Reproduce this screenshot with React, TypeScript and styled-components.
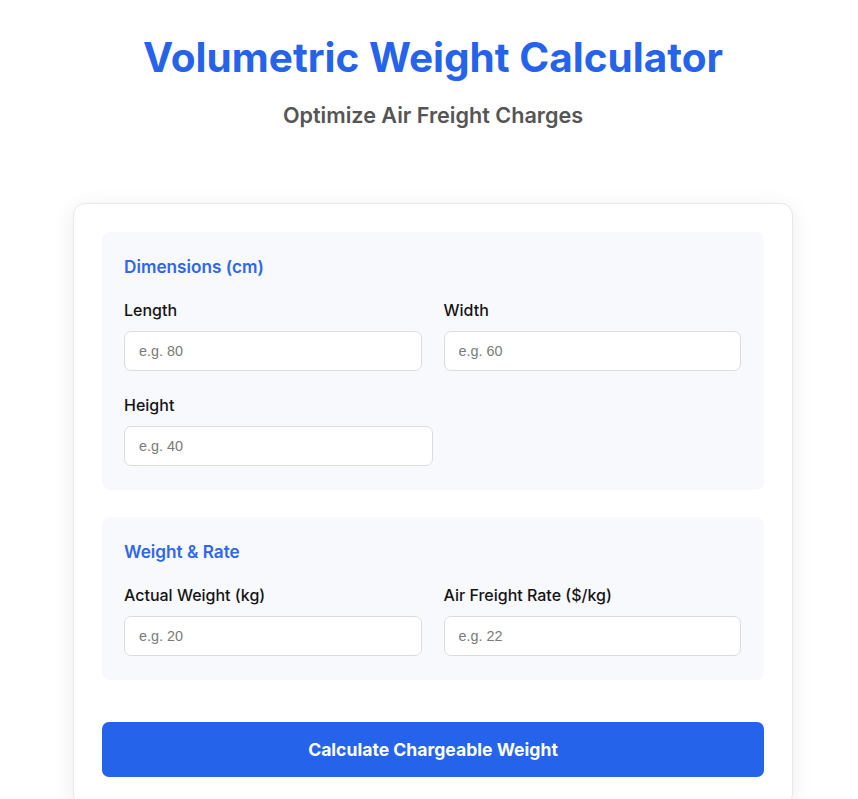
import React from "react";
import styled, { createGlobalStyle } from "styled-components";

const GlobalStyle = createGlobalStyle`
  html, body {
    margin: 0;
    padding: 0;
    background: #ffffff;
  }
  body {
    font-family: Inter, "Noto Sans", sans-serif;
    color: #1f1f1f;
  }
  * { box-sizing: border-box; }
`;

const Page = styled.div`
  padding: 34px 0 40px 8px;
  display: flex;
  flex-direction: column;
  align-items: center;
`;

const Header = styled.header`
  text-align: center;
  margin-bottom: 75px;
`;

const Title = styled.h1`
  margin: 0;
  font-size: 40.5px;
  line-height: 48px;
  font-weight: 700;
  color: #2563eb;
`;

const Subtitle = styled.p`
  margin: 21px 0 0;
  font-size: 21.6px;
  line-height: 25px;
  font-weight: 600;
  color: #555555;
`;

const Card = styled.main`
  width: 720px;
  background: #ffffff;
  border: 1px solid #e6e8ec;
  border-radius: 12px;
  box-shadow: 0 4px 22px rgba(0, 0, 0, 0.08);
  padding: 28px;
  display: flex;
  flex-direction: column;
`;

const Section = styled.section`
  background: #f8f9fd;
  border-radius: 8px;
  padding: 24px 23px 24px 22px;
  margin-bottom: 27px;
  &:last-of-type {
    margin-bottom: 42px;
  }
`;

const SectionTitle = styled.h2`
  margin: 0 0 24px;
  font-size: 17.2px;
  line-height: 21px;
  font-weight: 600;
  color: #2f66ec;
`;

const Grid = styled.div`
  display: grid;
  grid-template-columns: 1fr 1fr;
  column-gap: 22px;
  row-gap: 25px;
`;

const Field = styled.div<{ $half?: boolean }>`
  display: flex;
  flex-direction: column;
  ${(p) => (p.$half ? "grid-column: 1 / -1; width: 50%;" : "")}
`;

const Label = styled.label`
  font-size: 16px;
  line-height: 19px;
  font-weight: 450;
  color: #141414;
  margin-bottom: 11px;
`;

const Input = styled.input`
  height: 40px;
  width: 100%;
  padding: 0 14px;
  border: 1px solid #dcdcdc;
  border-radius: 7px;
  background: #ffffff;
  font-family: "Liberation Sans", Arial, sans-serif;
  font-size: 14.4px;
  color: #222;
  outline: none;
  &::placeholder {
    color: #7a7a7a;
  }
`;

const Button = styled.button`
  height: 55px;
  width: 100%;
  border: none;
  border-radius: 7px;
  background: #2563eb;
  color: #ffffff;
  font-family: Inter, "Noto Sans", sans-serif;
  font-size: 17.6px;
  font-weight: 700;
  cursor: pointer;
`;

export default function App() {
  return (
    <>
      <GlobalStyle />
      <Page>
        <Header>
          <Title>Volumetric Weight Calculator</Title>
          <Subtitle>Optimize Air Freight Charges</Subtitle>
        </Header>
        <Card>
          <Section>
            <SectionTitle>Dimensions (cm)</SectionTitle>
            <Grid>
              <Field>
                <Label htmlFor="length">Length</Label>
                <Input id="length" type="number" placeholder="e.g. 80" />
              </Field>
              <Field>
                <Label htmlFor="width">Width</Label>
                <Input id="width" type="number" placeholder="e.g. 60" />
              </Field>
              <Field $half>
                <Label htmlFor="height">Height</Label>
                <Input id="height" type="number" placeholder="e.g. 40" />
              </Field>
            </Grid>
          </Section>
          <Section>
            <SectionTitle>Weight &amp; Rate</SectionTitle>
            <Grid>
              <Field>
                <Label htmlFor="weight">Actual Weight (kg)</Label>
                <Input id="weight" type="number" placeholder="e.g. 20" />
              </Field>
              <Field>
                <Label htmlFor="rate">Air Freight Rate ($/kg)</Label>
                <Input id="rate" type="number" placeholder="e.g. 22" />
              </Field>
            </Grid>
          </Section>
          <Button type="button">Calculate Chargeable Weight</Button>
        </Card>
      </Page>
    </>
  );
}
